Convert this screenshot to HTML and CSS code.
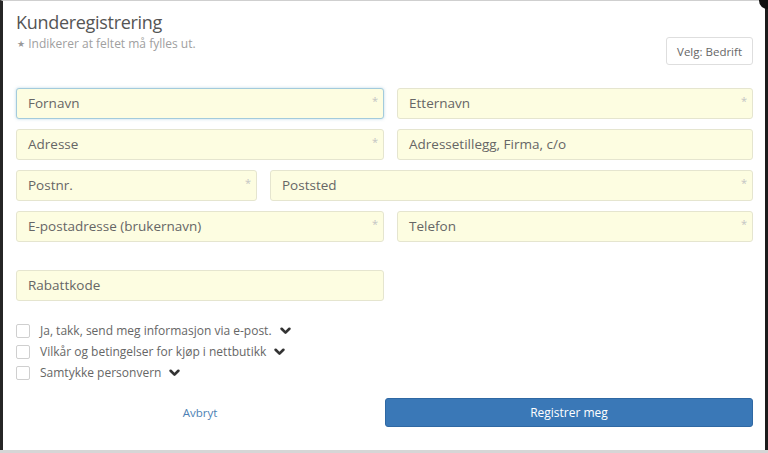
FILE: index.html
```html
<!DOCTYPE html>
<html lang="no">
<head>
    <meta charset="UTF-8">
    <meta name="viewport" content="width=device-width, initial-scale=1.0">
    <title>Kunderegistrering</title>
    <link rel="stylesheet" href="styles.css">
</head>
<body>

    <div class="modal">
        <span class="close-btn"></span>

        <!-- Header -->
        <div class="modal-header">
            <div>
                <h1>Kunderegistrering</h1>
                <p class="hint"><span class="star">&#9733;</span> Indikerer at feltet må fylles ut.</p>
            </div>
            <button class="btn-type">Velg: Bedrift</button>
        </div>

        <!-- Fields -->
        <div class="fields">
            <div class="row half">
                <div class="field focused">Fornavn<span class="req">*</span></div>
                <div class="field">Etternavn<span class="req">*</span></div>
            </div>
            <div class="row half">
                <div class="field">Adresse<span class="req">*</span></div>
                <div class="field">Adressetillegg, Firma, c/o</div>
            </div>
            <div class="row third">
                <div class="field">Postnr.<span class="req">*</span></div>
                <div class="field">Poststed<span class="req">*</span></div>
            </div>
            <div class="row half">
                <div class="field">E-postadresse (brukernavn)<span class="req">*</span></div>
                <div class="field">Telefon<span class="req">*</span></div>
            </div>
            <div class="row half spaced">
                <div class="field">Rabattkode</div>
            </div>
        </div>

        <!-- Consents -->
        <div class="checks">
            <label class="check"><span class="box"></span>Ja, takk, send meg informasjon via e-post.
                <svg class="chev" viewBox="0 0 10 7"><polyline points="1.5,1.5 5,5 8.5,1.5"/></svg></label>
            <label class="check"><span class="box"></span>Vilkår og betingelser for kjøp i nettbutikk
                <svg class="chev" viewBox="0 0 10 7"><polyline points="1.5,1.5 5,5 8.5,1.5"/></svg></label>
            <label class="check"><span class="box"></span>Samtykke personvern
                <svg class="chev" viewBox="0 0 10 7"><polyline points="1.5,1.5 5,5 8.5,1.5"/></svg></label>
        </div>

        <!-- Footer -->
        <div class="actions">
            <a class="link-cancel">Avbryt</a>
            <button class="btn-primary">Registrer meg</button>
        </div>
    </div>

</body>
</html>
```

FILE: styles.css
```css
body {
    margin: 0;
    background-color: #d6d6d6;
    font-family: "Open Sans", "DejaVu Sans", sans-serif;
    color: #555;
    overflow: hidden;
}

.modal {
    position: relative;
    box-sizing: border-box;
    height: 450px;
    background-color: #fff;
    border-left: 3px solid #262626;
    border-right: 3px solid #1c1c1c;
    border-top: 1px solid #cfcfcf;
    padding: 0 12px 0 13px;
}

.close-btn {
    position: absolute;
    top: -9px;
    right: -11px;
    width: 17px;
    height: 17px;
    border-radius: 50%;
    background-color: #111;
}

.modal-header {
    box-sizing: border-box;
    height: 87px;
    padding-top: 9px;
    display: flex;
    justify-content: space-between;
    align-items: flex-start;
}

h1 {
    margin: 0;
    font-size: 18px;
    font-weight: 400;
    letter-spacing: -0.3px;
    line-height: 24px;
    color: #555;
}

.hint {
    margin: 2px 0 0;
    font-size: 12px;
    line-height: 16px;
    color: #a0a0a0;
}

.star {
    font-size: 9px;
    color: #999;
    margin-left: 1px;
    vertical-align: 1px;
}

.btn-type {
    margin-top: 27px;
    height: 28px;
    padding: 0 10px;
    font-family: inherit;
    font-size: 11.5px;
    color: #666;
    background-color: #fff;
    border: 1px solid #dedede;
    border-radius: 3px;
}

/* Form fields */
.fields {
    display: flex;
    flex-direction: column;
    gap: 10px;
}

.row {
    display: grid;
    gap: 13px;
}

.row.half {
    grid-template-columns: 368px 1fr;
}

.row.third {
    grid-template-columns: 241px 1fr;
}

.row.spaced {
    margin-top: 18px;
}

.field {
    position: relative;
    box-sizing: border-box;
    height: 31px;
    padding: 0 11px;
    line-height: 29px;
    font-size: 13.5px;
    color: #666;
    background-color: #fdfde1;
    border: 1px solid #e5e5cf;
    border-radius: 3px;
}

.field.focused {
    border-color: #a3cbdc;
    box-shadow: 0 0 3px rgba(120, 175, 205, 0.5);
}

.req {
    position: absolute;
    top: -3px;
    right: 5px;
    font-size: 11px;
    color: #c4c4c4;
}

/* Checkboxes */
.checks {
    margin-top: 19px;
}

.check {
    display: flex;
    align-items: center;
    height: 21px;
    font-size: 12px;
    color: #666;
}

.box {
    box-sizing: border-box;
    width: 14px;
    height: 14px;
    margin-right: 10px;
    border: 1px solid #cfcfcf;
    border-radius: 2px;
    background-color: #fff;
}

.chev {
    width: 11px;
    height: 8px;
    margin-left: 8px;
    fill: none;
    stroke: #333;
    stroke-width: 2.4;
    stroke-linecap: round;
    stroke-linejoin: round;
}

/* Footer */
.actions {
    margin-top: 15px;
    display: grid;
    grid-template-columns: 368px 1fr;
    gap: 1px;
    align-items: center;
}

.link-cancel {
    text-align: center;
    font-size: 11.5px;
    color: #4d7fb4;
}

.btn-primary {
    height: 29px;
    font-family: inherit;
    font-size: 12px;
    color: #fff;
    background-color: #3a78b7;
    border: 1px solid #2f68a3;
    border-radius: 3px;
}
```
